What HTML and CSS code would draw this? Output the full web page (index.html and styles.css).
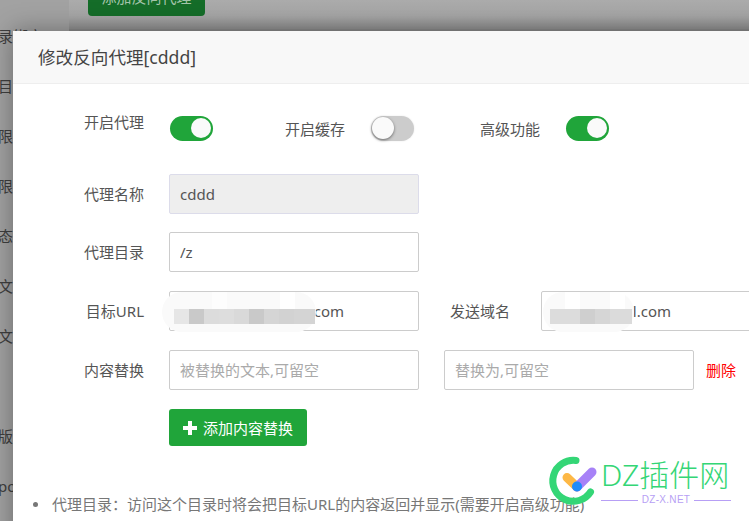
FILE: index.html
```html
<!DOCTYPE html>
<html lang="zh-CN">
<head>
<meta charset="utf-8">
<title>修改反向代理</title>
<link rel="stylesheet" href="styles.css">
</head>
<body>
<div class="page">
  <aside class="sidebar">
    <div class="side-item">录绑定</div>
    <div class="side-item">目录</div>
    <div class="side-item">限制</div>
    <div class="side-item">限制</div>
    <div class="side-item">态</div>
    <div class="side-item">文件</div>
    <div class="side-item">文件</div>
    <div class="side-item"></div>
    <div class="side-item">版本</div>
    <div class="side-item">po</div>
  </aside>
  <main class="content">
    <div class="top-btn">添加反向代理</div>
    <div class="table-line"></div>
  </main>
</div>

<section class="modal">
  <header class="modal-head">修改反向代理[cddd]</header>
  <div class="modal-body">
    <div class="row switches">
      <span class="label raised">开启代理</span>
      <span class="switch on"><i></i></span>
      <span class="label gap-a">开启缓存</span>
      <span class="switch off"><i></i></span>
      <span class="label gap-b">高级功能</span>
      <span class="switch on"><i></i></span>
    </div>
    <div class="row first">
      <span class="label">代理名称</span>
      <input class="field disabled" value="cddd" disabled>
    </div>
    <div class="row second">
      <span class="label">代理目录</span>
      <input class="field" value="/z">
    </div>
    <div class="row">
      <span class="label">目标URL</span>
      <div class="masked">
        <input class="field target" value="com">
        <svg class="mosaic mosaic-a" width="154" height="40" viewBox="0 0 154 40">
          <rect x="0" y="0" width="154" height="40" rx="20" fill="#fafafa"/>
          <rect x="50" y="0" width="15" height="17" fill="#fdfdfd"/>
          <rect x="118" y="0" width="15" height="17" fill="#ffffff"/>
          <rect x="12" y="17" width="15" height="15" fill="#e6e6e6"/>
          <rect x="27" y="17" width="15" height="15" fill="#c9c9c9"/>
          <rect x="42" y="17" width="15" height="15" fill="#dcdcdc"/>
          <rect x="57" y="17" width="15" height="15" fill="#dddddd"/>
          <rect x="72" y="17" width="15" height="15" fill="#d9d9d9"/>
          <rect x="87" y="17" width="15" height="15" fill="#c9c9c9"/>
          <rect x="102" y="17" width="15" height="15" fill="#d5d5d5"/>
          <rect x="117" y="17" width="15" height="15" fill="#d2d2d2"/>
          <rect x="132" y="17" width="21" height="15" fill="#d4d4d4"/>
        </svg>
      </div>
      <span class="label host-label">发送域名</span>
      <div class="masked">
        <input class="field host" value="l.com">
        <svg class="mosaic mosaic-b" width="91" height="40" viewBox="0 0 91 40">
          <rect x="0" y="0" width="91" height="40" rx="20" fill="#fafafa"/>
          <rect x="22" y="0" width="15" height="17" fill="#ffffff"/>
          <rect x="67" y="0" width="15" height="17" fill="#ffffff"/>
          <rect x="7" y="17" width="30" height="15" fill="#dcdcdc"/>
          <rect x="37" y="17" width="15" height="15" fill="#cfcfcf"/>
          <rect x="52" y="17" width="15" height="15" fill="#d6d6d6"/>
          <rect x="67" y="17" width="22" height="15" fill="#dbdbdb"/>
        </svg>
      </div>
    </div>
    <div class="row">
      <span class="label">内容替换</span>
      <input class="field" placeholder="被替换的文本,可留空">
      <input class="field replace-to" placeholder="替换为,可留空">
      <a class="remove">删除</a>
    </div>
    <button class="add-btn"><svg width="14" height="14" viewBox="0 0 14 14"><path d="M5 0h4v5h5v4H9v5H5V9H0V5h5z" fill="#fff"/></svg>添加内容替换</button>
    <ul class="notes">
      <li>代理目录：访问这个目录时将会把目标URL的内容返回并显示(需要开启高级功能)</li>
    </ul>
  </div>
</section>

<div class="logo">
  <svg class="logo-mark" width="60" height="60" viewBox="0 0 60 60">
    <path d="M31 8.500A20.500 20.500 0 1 0 45.500 40" fill="none" stroke="#34d676" stroke-width="7" stroke-linecap="round"/>
    <path d="M22 25.500L32 35" stroke="#fdb846" stroke-width="9" stroke-linecap="round"/>
    <path d="M32 35L47 20" stroke="#a782f7" stroke-width="9" stroke-linecap="round"/>
    <circle cx="32" cy="34.500" r="5" fill="#1f8cfb"/>
  </svg>
  <div class="logo-text">
    <div class="logo-name">DZ插件网</div>
    <div class="logo-sub"><span>DZ-X.NET</span></div>
  </div>
</div>
</body>
</html>
```
FILE: styles.css
```css
* { box-sizing: border-box; }
html, body {
  margin: 0;
  height: 521px;
  overflow: hidden;
  background: #a6a6a6;
  font-family: "Noto Sans", "Noto Sans CJK SC", sans-serif;
  font-size: 15px;
  color: #555;
}
.page { display: flex; height: 521px; }
.sidebar {
  width: 69px;
  background: #a2a2a2;
  padding-top: 11px;
  overflow: hidden;
}
.side-item {
  height: 50px;
  line-height: 50px;
  margin-left: -2px;
  color: #3f3f3f;
  white-space: nowrap;
}
.content { flex: 1; background: linear-gradient(#ababab, #a6a6a6 16px, #8f8f8f 30px); }
.top-btn {
  width: 117px;
  height: 19px;
  margin: -3px 0 0 19px;
  background: #156d29;
  border-radius: 0 0 4px 4px;
  color: #a3c4aa;
  font-size: 15px;
  line-height: 0;
  text-align: center;
  overflow: hidden;
}
.table-line { height: 2px; margin-top: 13px; background: #8a8a8a; }

.modal {
  position: absolute;
  left: 13px;
  top: 31px;
  width: 900px;
  height: 520px;
  background: #fff;
  box-shadow: 0 0 24px rgba(0, 0, 0, .35);
}
.modal-head {
  height: 53px;
  padding-left: 25px;
  background: #f8f8f8;
  border-bottom: 1px solid #eee;
  font-size: 17.600px;
  line-height: 52px;
  color: #444;
}
.modal-body { padding: 32px 0 0 51px; }
.row { display: flex; align-items: center; margin-bottom: 19px; }
.row.first { margin-bottom: 18px; }
.label { width: 80px; margin-right: 25px; text-align: right; line-height: 22px; flex: none; }
.switches { height: 25px; margin-bottom: 33px; }
.switches .label { margin-right: 26px; }
.switches .label.raised { margin-right: 26px; position: relative; top: -7px; }
.gap-a { margin-left: 52px; }
.gap-b { margin-left: 46px; }
.switch {
  position: relative;
  width: 43px;
  height: 25px;
  border-radius: 13px;
  flex: none;
  display: block;
}
.switch i {
  position: absolute;
  top: 2px;
  width: 20px;
  height: 20px;
  border-radius: 50%;
  background: #fafafa;
}
.switch.on { background: #20a53a; }
.switch.on i { right: 2px; }
.switch.off { background: #ccc; box-shadow: 0 0 2px rgba(0, 0, 0, .1); }
.switch.off i { left: 1px; box-shadow: 0 1px 3px rgba(0, 0, 0, .5); width: 22px; height: 22px; top: 1px; }

.field {
  width: 250px;
  height: 40px;
  padding: 0 10px;
  border: 1px solid #ccc;
  border-radius: 2px;
  background: #fff;
  font: inherit;
  color: #555;
  flex: none;
  outline: none;
}
.field.disabled { background: #eee; border-color: #dcdcea; color: #555; }
.field::placeholder { color: #aaa; }
.replace-to { margin-left: 25px; }
.masked { position: relative; flex: none; }
.masked .field { display: block; text-align: right; }
.field.target { padding-right: 74px; }
.field.host { width: 300px; padding-right: 169px; }
.mosaic { position: absolute; top: 1px; }
.mosaic-a { left: -7px; }
.mosaic-b { left: 2px; }
.host-label { margin-left: 11px; margin-right: 31px; }
.remove { margin-left: 12px; color: #f00; line-height: 22px; }
.add-btn {
  display: flex;
  align-items: center;
  width: 138px;
  height: 37px;
  margin-left: 105px;
  padding: 0 0 0 14px;
  border: 0;
  border-radius: 3px;
  background: #20a53a;
  color: #fff;
  font: inherit;
}
.add-btn svg { margin-right: 6px; }
.notes { margin: 47px 0 0 -32px; padding: 0 0 0 20px; color: #777; line-height: 22px; list-style: none; }
.notes li { position: relative; white-space: nowrap; }
.notes li::before {
  content: "";
  position: absolute;
  left: -19px;
  top: 9px;
  width: 5px;
  height: 5px;
  border-radius: 50%;
  background: #777;
}

.logo { position: absolute; left: 545px; top: 452px; display: flex; }
.logo-text { width: 130px; margin-left: -4px; padding-top: 4px; }
.logo-name { font-size: 30px; font-weight: 300; line-height: 38px; color: #34d676; white-space: nowrap; }
.logo-sub {
  display: flex;
  align-items: center;
  gap: 4px;
  font-size: 10px;
  line-height: 12px;
  color: #b79ff5;
  font-family: "Liberation Sans", sans-serif;
}
.logo-sub::before, .logo-sub::after { content: ""; flex: 1; height: 1px; background: #b79ff5; }
.logo-sub span { letter-spacing: .3px; }
```
